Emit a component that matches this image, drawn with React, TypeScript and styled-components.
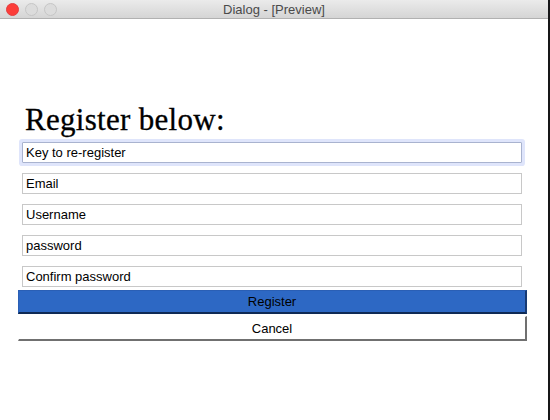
import { createGlobalStyle, styled } from "styled-components";

const GlobalStyle = createGlobalStyle`
  html, body {
    margin: 0;
    padding: 0;
    background: #1c1c1e;
  }
  body {
    font-family: "Liberation Sans", Arial, sans-serif;
  }
`;

const Screen = styled.div`
  display: flex;
  width: 550px;
  height: 420px;
  overflow: hidden;
`;

const Window = styled.div`
  width: 548px;
  height: 420px;
  background: #ffffff;
  display: flex;
  flex-direction: column;
`;

const Desktop = styled.div`
  flex: 1;
  background: #161618;
`;

const TitleBar = styled.div`
  position: relative;
  height: 18px;
  flex-shrink: 0;
  display: flex;
  align-items: center;
  justify-content: center;
  background: linear-gradient(#ebebeb, #d5d5d5);
  border-bottom: 1px solid #b1b1b1;
`;

const Lights = styled.div`
  position: absolute;
  left: 6px;
  top: 3px;
  display: flex;
  gap: 6px;
`;

const Light = styled.span<{ $color: string; $edge: string }>`
  width: 13px;
  height: 13px;
  border-radius: 50%;
  box-sizing: border-box;
  background: ${(p) => p.$color};
  border: 1px solid ${(p) => p.$edge};
`;

const Title = styled.div`
  font-family: "Liberation Sans", Arial, sans-serif;
  font-size: 13px;
  color: #4a4a4a;
`;

const Content = styled.div`
  padding: 83px 0 0 18px;
  width: 509px;
`;

const Heading = styled.h1`
  margin: 0 0 4px 7px;
  font-family: "Liberation Serif", "Times New Roman", serif;
  font-weight: normal;
  font-size: 31px;
  line-height: 36px;
  color: #000;
  letter-spacing: 0.3px;
  -webkit-text-stroke: 0.3px #000;
`;

const Fields = styled.div`
  display: flex;
  flex-direction: column;
  gap: 10px;
  padding-left: 4px;
  margin-bottom: 3px;
`;

const Field = styled.input<{ $focused?: boolean }>`
  box-sizing: border-box;
  width: 500px;
  height: 21px;
  margin: 0;
  padding: 0 0 0 3px;
  font-family: "Liberation Sans", Arial, sans-serif;
  font-size: 13px;
  color: #000;
  background: #fff;
  outline: none;
  border: 1px solid ${(p) => (p.$focused ? "#a9b3cf" : "#c8c8c8")};
  box-shadow: ${(p) => (p.$focused ? "0 0 0 3px #dfe5fb" : "none")};
  border-radius: ${(p) => (p.$focused ? "1px" : "0")};
  &::placeholder {
    color: #000;
  }
`;

const Button = styled.button<{ $primary?: boolean }>`
  display: block;
  box-sizing: border-box;
  width: 509px;
  height: ${(p) => (p.$primary ? "24px" : "25px")};
  margin: 0 0 2px;
  padding: 0;
  font-family: "Liberation Sans", Arial, sans-serif;
  font-size: 13px;
  color: #000;
  background: ${(p) => (p.$primary ? "#2d68c4" : "#ffffff")};
  border: none;
  border-top: 1px solid ${(p) => (p.$primary ? "#2a5fb5" : "#ffffff")};
  border-left: 1px solid ${(p) => (p.$primary ? "#2a5fb5" : "#ffffff")};
  border-right: 2px solid ${(p) => (p.$primary ? "#173a73" : "#707070")};
  border-bottom: 2px solid ${(p) => (p.$primary ? "#0f2a55" : "#707070")};
`;

const fields = [
  "Key to re-register",
  "Email",
  "Username",
  "password",
  "Confirm password",
];

export default function App() {
  return (
    <Screen>
      <GlobalStyle />
      <Window>
        <TitleBar>
          <Lights>
            <Light $color="#fc3d39" $edge="#e33e41" />
            <Light $color="#dcdcdc" $edge="#c6c6c6" />
            <Light $color="#dcdcdc" $edge="#c6c6c6" />
          </Lights>
          <Title>Dialog - [Preview]</Title>
        </TitleBar>
        <Content>
          <Heading>Register below:</Heading>
          <Fields>
            {fields.map((f, i) => (
              <Field key={f} placeholder={f} $focused={i === 0} readOnly />
            ))}
          </Fields>
          <Button $primary>Register</Button>
          <Button>Cancel</Button>
        </Content>
      </Window>
      <Desktop />
    </Screen>
  );
}
